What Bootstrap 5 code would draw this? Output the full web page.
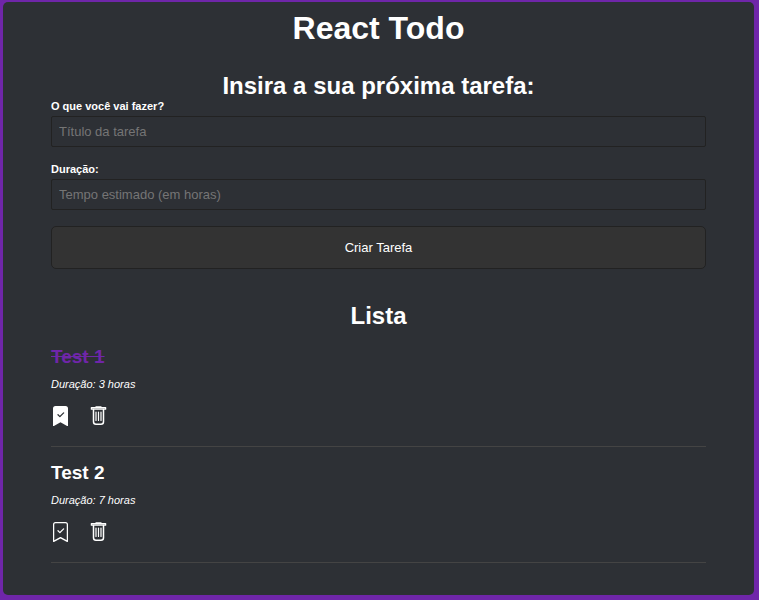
<!DOCTYPE html>
<html lang="pt-BR">
<head>
<meta charset="utf-8">
<meta name="viewport" content="width=device-width, initial-scale=1">
<title>React Todo</title>
<link href="https://cdn.jsdelivr.net/npm/bootstrap@5.3.0/dist/css/bootstrap.min.css" rel="stylesheet">
<style>
body { background: #6f26a9; color: #fff; font-family: "Liberation Sans", Arial, sans-serif; padding: 2px 5px 5px 3px; }
.todo-app { background: #2d3035; border-radius: 5px; padding: 8px 48px 16px; }
.app-title { font-size: 32px; line-height: 37px; margin-bottom: 25px; }
.section-title { font-size: 24px; line-height: 28px; }
.field-label { font-size: 11px; line-height: 13px; margin-bottom: 3px; }
.todo-input, .todo-input:focus { background: #2d3035; border: 1px solid #222; border-radius: 2px; color: #fff; font-size: 13px; line-height: 15px; padding: 7px; }
.todo-input::placeholder { color: #757575; }
.todo-submit, .todo-submit:hover { background: #333; border: 1px solid #222; border-radius: 5px; color: #fff; font-size: 13px; line-height: 15px; padding: 13px; }
.list-title { margin: 33px 0 16px; }
.todo-item { border-bottom: 1px solid #444; padding: 0 0 20px; margin-bottom: 15px; }
.item-title { font-size: 19px; line-height: 22px; margin-bottom: 10px; }
.item-title.done { color: #6f26a9; text-decoration: line-through; }
.item-time { font-size: 11px; line-height: 13px; font-style: italic; margin-bottom: 15px; }
.icon-button { width: 20px; height: 20px; color: #fff; }
.item-actions { gap: 18px; }
</style>
<script src="https://cdn.jsdelivr.net/npm/bootstrap@5.3.0/dist/js/bootstrap.bundle.min.js"></script>
</head>
<body class="min-vh-100 d-flex flex-column">
<main class="todo-app flex-grow-1">
  <h1 class="app-title fw-bold text-center">React Todo</h1>
  <section>
    <h2 class="section-title fw-bold text-center mb-0">Insira a sua próxima tarefa:</h2>
    <form>
      <div class="mb-3">
        <label class="field-label fw-bold d-block" for="title">O que você vai fazer?</label>
        <input class="todo-input form-control" type="text" id="title" placeholder="Título da tarefa">
      </div>
      <div class="mb-3">
        <label class="field-label fw-bold d-block" for="time">Duração:</label>
        <input class="todo-input form-control" type="text" id="time" placeholder="Tempo estimado (em horas)">
      </div>
      <button class="todo-submit btn w-100" type="submit">Criar Tarefa</button>
    </form>
  </section>
  <section>
    <h2 class="section-title list-title fw-bold text-center">Lista</h2>
    <article class="todo-item">
      <h3 class="item-title done fw-bold">Test 1</h3>
      <p class="item-time">Duração: 3 horas</p>
      <div class="item-actions d-flex">
        <button class="icon-button btn border-0 p-0 d-flex" type="button" aria-label="Reabrir tarefa">
          <svg width="20" height="20" viewBox="0.4 0 16 16" fill="currentColor"><path fill-rule="evenodd" d="M2 15.5V2a2 2 0 0 1 2-2h8a2 2 0 0 1 2 2v13.5a.5.5 0 0 1-.74.439L8 13.069l-5.26 2.87A.5.5 0 0 1 2 15.5zm8.854-9.646a.5.5 0 0 0-.708-.708L7.5 7.793 6.354 6.646a.5.5 0 1 0-.708.708l1.5 1.5a.5.5 0 0 0 .708 0l3-3z"/></svg>
        </button>
        <button class="icon-button btn border-0 p-0 d-flex" type="button" aria-label="Excluir tarefa">
          <svg width="20" height="20" viewBox="0 0 20 20" fill="none" stroke="currentColor" stroke-linecap="round" stroke-linejoin="round"><path stroke-width="1.3" d="M7 1.2V.8h5v.4M2.4 1.6h14.2v1.6H2.4z"/><path stroke-width="1.5" d="M4.5 3.5v12.2a2.5 2.5 0 0 0 2.5 2.5h5a2.5 2.5 0 0 0 2.5-2.5V3.5"/><path stroke-width="1.2" d="M7 6v8.5M9.5 6v8.5M12 6v8.5"/></svg>
        </button>
      </div>
    </article>
    <article class="todo-item">
      <h3 class="item-title fw-bold">Test 2</h3>
      <p class="item-time">Duração: 7 horas</p>
      <div class="item-actions d-flex">
        <button class="icon-button btn border-0 p-0 d-flex" type="button" aria-label="Concluir tarefa">
          <svg width="20" height="20" viewBox="0.4 0 16 16" fill="currentColor"><path fill-rule="evenodd" d="M10.854 5.146a.5.5 0 0 1 0 .708l-3 3a.5.5 0 0 1-.708 0l-1.5-1.5a.5.5 0 1 1 .708-.708L7.5 7.793l2.646-2.647a.5.5 0 0 1 .708 0z"/><path d="M2 2a2 2 0 0 1 2-2h8a2 2 0 0 1 2 2v13.5a.5.5 0 0 1-.777.416L8 13.101l-5.223 2.815A.5.5 0 0 1 2 15.5V2zm2-1a1 1 0 0 0-1 1v12.566l4.723-2.482a.5.5 0 0 1 .554 0L13 14.566V2a1 1 0 0 0-1-1H4z"/></svg>
        </button>
        <button class="icon-button btn border-0 p-0 d-flex" type="button" aria-label="Excluir tarefa">
          <svg width="20" height="20" viewBox="0 0 20 20" fill="none" stroke="currentColor" stroke-linecap="round" stroke-linejoin="round"><path stroke-width="1.3" d="M7 1.2V.8h5v.4M2.4 1.6h14.2v1.6H2.4z"/><path stroke-width="1.5" d="M4.5 3.5v12.2a2.5 2.5 0 0 0 2.5 2.5h5a2.5 2.5 0 0 0 2.5-2.5V3.5"/><path stroke-width="1.2" d="M7 6v8.5M9.5 6v8.5M12 6v8.5"/></svg>
        </button>
      </div>
    </article>
  </section>
</main>
</body>
</html>
